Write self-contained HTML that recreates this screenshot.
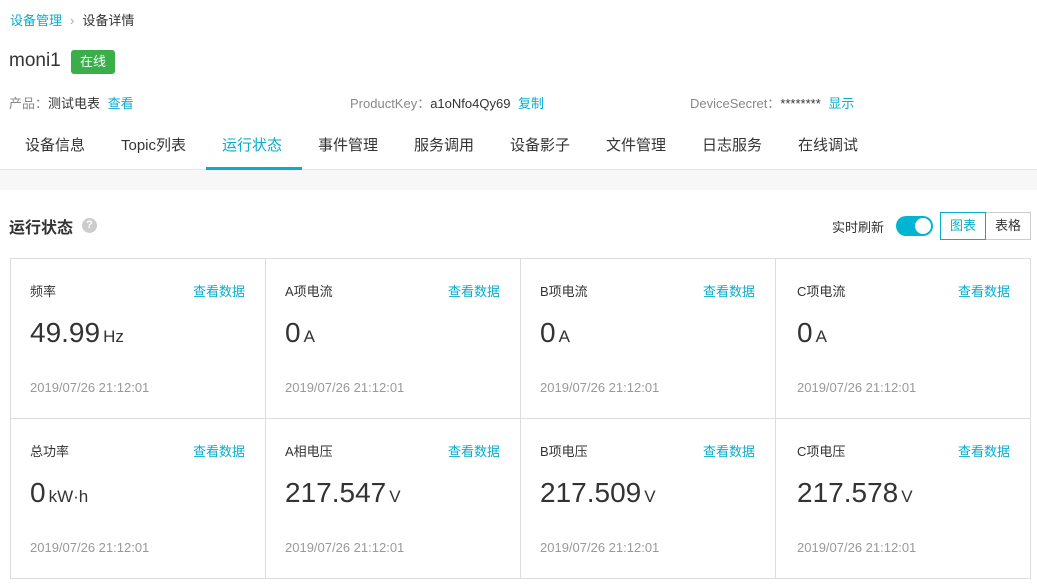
<!DOCTYPE html>
<html><head><meta charset="utf-8"><style>
*{margin:0;padding:0;box-sizing:border-box}
body{width:1037px;height:584px;background:#fff;font-family:"Liberation Sans","Noto Sans CJK SC",sans-serif;color:#333;position:relative;overflow:hidden}
.a{position:absolute;white-space:nowrap}
.blue{color:#0aaccc}
.card{position:absolute;width:256px;height:161px;border:1px solid #ddd}
.card .t{position:absolute;left:19px;top:22px;font-size:13px;color:#333}
.card .l{position:absolute;right:20px;top:22px;font-size:13px;color:#0aaccc}
.card .v{position:absolute;left:19px;top:58px;font-size:28px;color:#333}
.card .v small{font-size:17px;margin-left:3px}
.card .d{position:absolute;left:19px;top:121px;font-size:13px;color:#999}
.tab{position:absolute;top:134px;font-size:15px;color:#333}
</style></head><body>
<div class="a" style="left:10px;top:10px;font-size:13px"><span class="blue">设备管理</span><span style="color:#aaa;margin:0 8px">›</span><span>设备详情</span></div>
<div class="a" style="left:9px;top:50px;font-size:19px;color:#333">moni1</div>
<div class="a" style="left:71px;top:50px;width:44px;height:24px;background:#3aae49;border-radius:3px;color:#fff;font-size:13px;line-height:24px;text-align:center">在线</div>
<div class="a" style="left:9px;top:93px;font-size:13px"><span style="color:#888">产品：</span>测试电表 <span class="blue" style="margin-left:4px">查看</span></div>
<div class="a" style="left:350px;top:93px;font-size:13px"><span style="color:#888">ProductKey：</span>a1oNfo4Qy69 <span class="blue" style="margin-left:4px">复制</span></div>
<div class="a" style="left:690px;top:93px;font-size:13px"><span style="color:#888">DeviceSecret：</span>******** <span class="blue" style="margin-left:4px">显示</span></div>
<div class="tab" style="left:25px">设备信息</div>
<div class="tab" style="left:121px">Topic列表</div>
<div class="tab" style="left:222px;color:#0aaccc">运行状态</div>
<div class="tab" style="left:318px">事件管理</div>
<div class="tab" style="left:414px">服务调用</div>
<div class="tab" style="left:510px">设备影子</div>
<div class="tab" style="left:606px">文件管理</div>
<div class="tab" style="left:702px">日志服务</div>
<div class="tab" style="left:798px">在线调试</div>
<div class="a" style="left:0;top:169px;width:1037px;height:21px;background:#f7f7f7;border-top:1px solid #e6e6e6"></div>
<div class="a" style="left:206px;top:167px;width:96px;height:3px;background:#0aaccc"></div>
<div class="a" style="left:9px;top:214px;font-size:16px;font-weight:bold;color:#333">运行状态</div>
<div class="a" style="left:82px;top:218px;width:15px;height:15px;border-radius:50%;background:#ccc;color:#fff;font-size:11px;line-height:15px;text-align:center;font-weight:bold">?</div>
<div class="a" style="left:832px;top:217px;font-size:13px">实时刷新</div>
<div class="a" style="left:896px;top:216px;width:37px;height:20px;border-radius:10px;background:#00b5d2"><div style="position:absolute;right:2px;top:2px;width:16px;height:16px;border-radius:50%;background:#fff"></div></div>
<div class="a" style="left:940px;top:212px;width:46px;height:28px;border:1px solid #0aaccc;color:#0aaccc;font-size:13px;line-height:26px;text-align:center">图表</div>
<div class="a" style="left:986px;top:212px;width:45px;height:28px;border:1px solid #ccc;border-left:none;font-size:13px;line-height:26px;text-align:center">表格</div>

<div class="card" style="left:10px;top:258px"><div class="t">频率</div><div class="l">查看数据</div><div class="v">49.99<small>Hz</small></div><div class="d">2019/07/26 21:12:01</div></div>
<div class="card" style="left:265px;top:258px"><div class="t">A项电流</div><div class="l">查看数据</div><div class="v">0<small>A</small></div><div class="d">2019/07/26 21:12:01</div></div>
<div class="card" style="left:520px;top:258px"><div class="t">B项电流</div><div class="l">查看数据</div><div class="v">0<small>A</small></div><div class="d">2019/07/26 21:12:01</div></div>
<div class="card" style="left:775px;top:258px;width:256px"><div class="t" style="left:21px">C项电流</div><div class="l">查看数据</div><div class="v" style="left:21px">0<small>A</small></div><div class="d" style="left:21px">2019/07/26 21:12:01</div></div>
<div class="card" style="left:10px;top:418px"><div class="t">总功率</div><div class="l">查看数据</div><div class="v">0<small>kW·h</small></div><div class="d">2019/07/26 21:12:01</div></div>
<div class="card" style="left:265px;top:418px"><div class="t">A相电压</div><div class="l">查看数据</div><div class="v">217.547<small>V</small></div><div class="d">2019/07/26 21:12:01</div></div>
<div class="card" style="left:520px;top:418px"><div class="t">B项电压</div><div class="l">查看数据</div><div class="v">217.509<small>V</small></div><div class="d">2019/07/26 21:12:01</div></div>
<div class="card" style="left:775px;top:418px;width:256px"><div class="t" style="left:21px">C项电压</div><div class="l">查看数据</div><div class="v" style="left:21px">217.578<small>V</small></div><div class="d" style="left:21px">2019/07/26 21:12:01</div></div>
</body></html>
